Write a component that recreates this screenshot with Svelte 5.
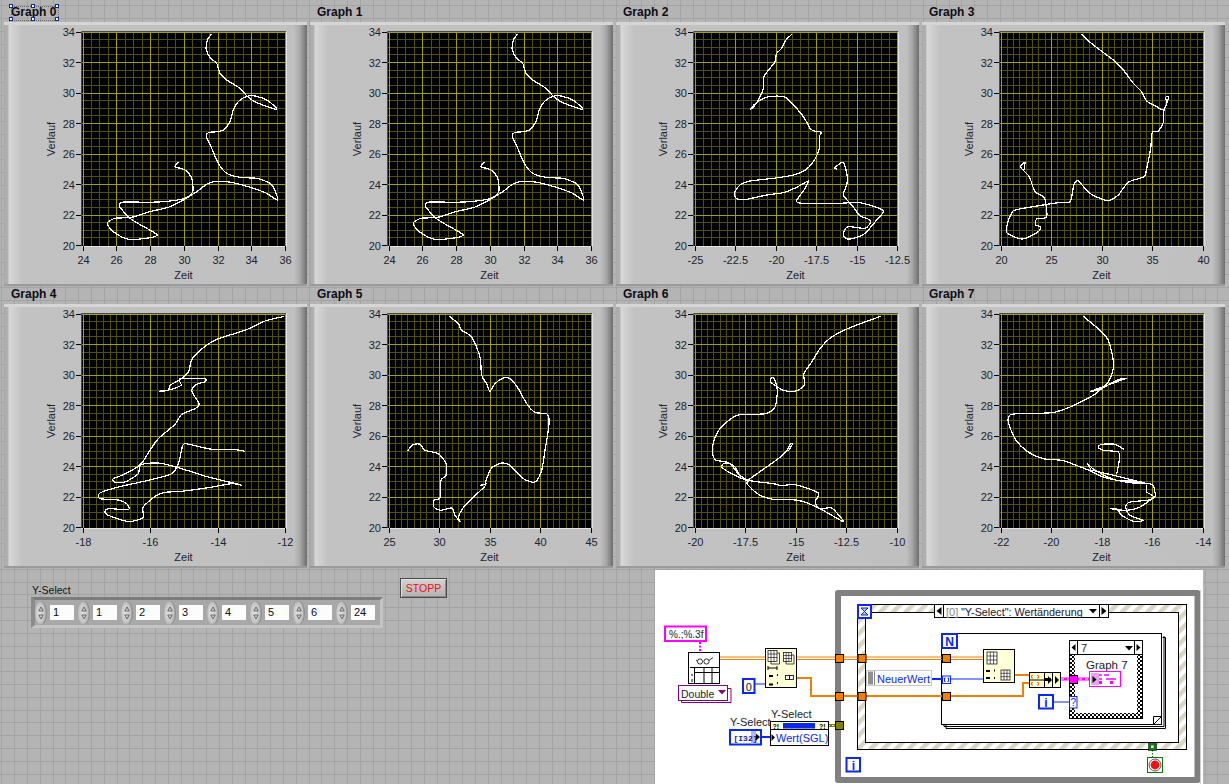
<script>
  const g0 = [[[635,102],[622,120],[619,150],[632,175],[650,190],[660,220],[680,240],[720,265],[745,292],[775,310],[830,328],[805,303],[770,289],[740,289],[715,305],[700,330],[690,365],[670,390],[650,395],[625,398],[619,410],[635,445],[655,490],[680,520],[720,532],[770,535],[800,545],[820,560],[833,600],[800,580],[760,565],[700,548],[660,544],[625,550],[590,575],[555,597],[510,620],[450,635],[395,652],[345,655],[322,670],[340,695],[385,718],[445,714],[472,705],[440,685],[390,655],[358,618],[372,606],[450,607],[510,603],[555,595],[578,575],[575,535],[555,510],[525,500],[535,487]]];
  const graphs = [
    { name: 'Graph 0', ticks: ['24','26','28','30','32','34','36'], sub: 4, zx: 0, zy: 0, curves: g0 },
    { name: 'Graph 1', ticks: ['24','26','28','30','32','34','36'], sub: 4, zx: 306, zy: 0, curves: g0 },
    { name: 'Graph 2', ticks: ['-25','-22.5','-20','-17.5','-15','-12.5'], sub: 5, zx: 680, zy: 25, curves: [[[335,28],[318,45],[305,70],[290,85],[285,110],[270,130],[252,155],[249,195],[240,215],[225,240],[212,253],[230,232],[265,215],[312,215],[335,235],[365,268],[382,295],[392,313],[412,320],[425,322],[418,335],[418,370],[405,402],[380,432],[340,450],[280,460],[210,468],[180,480],[163,505],[172,522],[200,523],[260,510],[310,503],[350,487],[385,468],[372,495],[350,527],[368,535],[480,535],[530,532],[575,542],[610,558],[590,585],[555,625],[520,640],[497,640],[490,625],[505,605],[555,610],[572,590],[560,580],[540,572],[515,540],[490,510],[500,480],[502,455],[490,412],[465,428],[472,433]]] },
    { name: 'Graph 3', ticks: ['20','25','30','35','40'], sub: 8, zx: 990, zy: 25, curves: [[[275,28],[310,60],[370,105],[400,135],[430,175],[455,200],[470,228],[500,245],[520,255],[530,235],[535,215],[527,217],[530,235],[522,255],[520,292],[505,318],[487,322],[482,370],[470,430],[462,455],[415,472],[385,510],[360,526],[340,524],[297,503],[265,468],[252,478],[240,530],[205,533],[160,540],[75,555],[62,570],[50,605],[52,625],[98,642],[145,620],[150,605],[137,600],[140,582],[170,575],[163,518],[135,500],[118,455],[92,427],[105,412],[102,435]]] },
    { name: 'Graph 4', ticks: ['-18','-16','-14','-12'], sub: 10, zx: 75, zy: 307, curves: [[[628,28],[570,42],[510,70],[430,95],[390,118],[352,155],[340,195],[315,218],[285,235],[280,250],[253,253],[285,248],[318,235],[315,215],[388,215],[390,224],[365,232],[350,252],[372,290],[360,305],[320,322],[300,352],[250,395],[225,430],[205,462],[190,478],[145,503],[115,515],[118,525],[150,525],[190,500],[195,475],[230,468],[265,470],[320,485],[400,510],[475,528],[500,535],[470,530],[400,542],[320,553],[270,556],[245,565],[205,600],[205,630],[185,640],[155,643],[100,625],[90,612],[105,605],[160,608],[155,590],[125,578],[75,575],[75,558],[130,540],[220,520],[290,500],[310,470],[322,420],[333,410],[410,427],[480,428],[510,433]]] },
    { name: 'Graph 5', ticks: ['25','30','35','40','45'], sub: 8, zx: 380, zy: 307, curves: [[[208,28],[235,50],[245,70],[275,90],[300,150],[305,205],[320,230],[330,253],[345,230],[368,214],[390,215],[415,245],[440,290],[465,316],[500,320],[507,335],[505,370],[495,430],[485,490],[465,525],[430,515],[390,475],[365,468],[335,483],[318,520],[317,535],[300,552],[255,595],[235,630],[240,643],[225,625],[215,603],[183,610],[162,600],[162,580],[180,572],[183,520],[198,505],[198,470],[175,440],[135,430],[120,412],[100,413],[82,432]],[[300,535],[317,532]]] },
    { name: 'Graph 6', ticks: ['-20','-17.5','-15','-12.5','-10'], sub: 8, zx: 685, zy: 307, curves: [[[587,28],[500,60],[440,90],[405,125],[380,165],[357,200],[358,235],[330,253],[295,250],[270,235],[257,225],[257,214],[268,215],[277,250],[270,300],[240,320],[160,324],[125,345],[95,380],[82,425],[90,458],[125,465],[150,480],[165,505],[190,522],[150,505],[112,482],[115,470],[135,470],[160,500],[190,520],[265,530],[290,536],[330,533],[400,558],[390,585],[405,605],[440,603],[470,635],[472,643],[405,605],[340,580],[270,578],[225,565],[195,540],[190,520],[280,455],[305,432],[315,412],[322,412],[310,432]]] },
    { name: 'Graph 7', ticks: ['-22','-20','-18','-16','-14'], sub: 8, zx: 990, zy: 307, curves: [[[280,28],[330,70],[355,100],[368,150],[370,185],[355,225],[325,248],[302,253],[365,230],[408,214],[385,218],[335,245],[310,265],[240,300],[185,317],[85,320],[60,324],[55,345],[75,395],[110,432],[160,455],[220,461],[300,490],[292,470],[315,490],[380,520],[440,522],[470,530],[400,512],[350,500],[300,490],[340,510],[420,527],[485,532],[495,570],[470,580],[420,585],[407,600],[420,625],[460,640],[430,643],[395,625],[380,605],[362,605],[410,610],[450,600],[490,570],[470,555],[470,535]],[[380,500],[388,460],[385,435],[340,430],[325,420],[335,412],[375,412],[403,428]]] }
  ];

  const plotL = 78, plotT = 10, plotW = 204, plotH = 214;
  const yTicks = ['34','32','30','28','26','24','22','20'];
  const tickStep = 30.5;
  const crisp = (v) => Math.floor(v) + 0.5;

  function xAt(i, n) { return crisp(plotL + 1 + (i * 202.5) / n); }
  function yAt(i) { return crisp(plotT + i * tickStep); }

  function hLines() {
    const out = [];
    for (let i = 0; i < 28; i++) out.push({ y: crisp(plotT + (i * tickStep) / 4), major: i % 4 === 0 });
    return out;
  }
  function vLines(g) {
    const n = (g.ticks.length - 1) * g.sub;
    const out = [];
    for (let i = 0; i <= n; i++) out.push({ x: xAt(i, n), major: i % g.sub === 0 });
    return out;
  }
  function curvePath(seg, g, idx) {
    const col = idx % 4, row = idx > 3 ? 1 : 0;
    const px = 4 + 306 * col, py = 22 + 282 * row;
    const p = seg.map(([x, y]) => [g.zx + x / 3 - px, g.zy + y / 3 - py]);
    let d = `M${p[0][0].toFixed(1)} ${p[0][1].toFixed(1)}`;
    for (let i = 0; i < p.length - 1; i++) {
      const a = p[Math.max(0, i - 1)], b = p[i], c = p[i + 1], e = p[Math.min(p.length - 1, i + 2)];
      const k = 1 / 8;
      d += `C${(b[0] + (c[0] - a[0]) * k).toFixed(1)} ${(b[1] + (c[1] - a[1]) * k).toFixed(1)} ${(c[0] - (e[0] - b[0]) * k).toFixed(1)} ${(c[1] - (e[1] - b[1]) * k).toFixed(1)} ${c[0].toFixed(1)} ${c[1].toFixed(1)}`;
    }
    return d;
  }
  const selects = ['1','1','2','3','4','5','6','24'];
  const handles = [[5,0],[27,0],[51,0],[5,13],[27,13],[51,13]];
</script>

<div class="page">
  <div class="board">
    {#each graphs as g, idx}
      <section class="cell">
        <div class="name">{g.name}</div>
        <div class="panel">
          <svg class="chart" width="303" height="262" viewBox="0 0 303 262">
            <rect x={plotL} y={plotT} width={plotW} height={plotH} fill="#000" />
            {#each hLines() as l}
              {#if !l.major}<line x1={plotL} x2={plotL + plotW} y1={l.y} y2={l.y} class="minor" />{/if}
            {/each}
            {#each vLines(g) as l}
              {#if !l.major}<line x1={l.x} x2={l.x} y1={plotT} y2={plotT + plotH} class="minor" />{/if}
            {/each}
            {#each hLines() as l}
              {#if l.major}<line x1={plotL} x2={plotL + plotW} y1={l.y} y2={l.y} class="major" />{/if}
            {/each}
            {#each vLines(g) as l}
              {#if l.major}<line x1={l.x} x2={l.x} y1={plotT} y2={plotT + plotH} class="major" />{/if}
            {/each}
            {#each g.curves as seg}
              <path d={curvePath(seg, g, idx)} class="trace" />
            {/each}
            <path d="M{plotL - 0.5} {plotT + plotH}V{plotT - 0.5}H{plotL + plotW}" class="frame" />
            <path d="M{plotL} {plotT + plotH + 0.5}H{plotL + plotW + 0.5}V{plotT}" class="frame-light" />
            {#each yTicks as t, i}
              <line x1="72" x2="77" y1={yAt(i)} y2={yAt(i)} class="tick" />
              <text x="71" y={plotT + i * tickStep + 4} text-anchor="end" class="axis">{t}</text>
            {/each}
            {#each g.ticks as t, i}
              <line x1={xAt(i, g.ticks.length - 1)} x2={xAt(i, g.ticks.length - 1)} y1={plotT + plotH} y2={plotT + plotH + 5} class="tick" />
              <text x={xAt(i, g.ticks.length - 1)} y="242" text-anchor="middle" class="axis">{t}</text>
            {/each}
            <text x="179.5" y="256.5" text-anchor="middle" class="axis">Zeit</text>
            <text x="51" y="117" text-anchor="middle" class="axis" transform="rotate(-90 51 117)">Verlauf</text>
          </svg>
        </div>
        {#if idx === 0}
          <div class="marquee"></div>
          {#each handles as h}
            <svg class="handle" width="4" height="4" viewBox="0 0 4 4" style="left:{h[0]}px;top:{h[1]}px">
              <rect x=".5" y=".5" width="3" height="3" fill="#fff" stroke="#0a2a8c" />
            </svg>
          {/each}
        {/if}
      </section>
    {/each}
  </div>

  <div class="lower">
    <div class="controls">
      <div class="group">
        <div class="ylabel">Y-Select</div>
        <div class="array">
          {#each selects as v}
            <div class="item">
              <svg class="spin" width="12" height="24" viewBox="0 0 12 24">
                <defs>
                  <radialGradient id="sp" cx=".4" cy=".5" r=".6">
                    <stop offset="0" stop-color="#e2e2e2" />
                    <stop offset=".7" stop-color="#c2c2c2" />
                    <stop offset="1" stop-color="#7e7e7e" />
                  </radialGradient>
                </defs>
                <ellipse cx="6" cy="12" rx="5.8" ry="12" fill="url(#sp)" />
                <path d="M6 6L3.8 10H8.2Z" fill="none" stroke="#666" />
                <path d="M6 18L3.8 14H8.2Z" fill="none" stroke="#666" />
              </svg>
              <span class="value">{v}</span>
            </div>
          {/each}
        </div>
      </div>
      <button class="stop">STOPP</button>
    </div>

    <svg class="diagram" width="548" height="214" viewBox="655 570 548 214">
      <defs>
        <pattern id="hatch" width="9" height="9" patternUnits="userSpaceOnUse" patternTransform="rotate(-45)">
          <rect width="9" height="9" fill="#fff" />
          <rect width="9" height="4.5" fill="#d8d5c2" />
        </pattern>
        <pattern id="check" width="4" height="4" patternUnits="userSpaceOnUse">
          <rect width="4" height="4" fill="#fff" />
          <rect width="2" height="2" fill="#000" />
          <rect x="2" y="2" width="2" height="2" fill="#000" />
        </pattern>
      </defs>

      <!-- while loop -->
      <path d="M838 593H1197.5V780H838Z" fill="none" stroke="#808080" stroke-width="6" stroke-linejoin="round" />
      <path d="M1200.5 590V784" stroke="#d0d0d0" stroke-width="1" />

      <!-- event structure -->
      <rect x="857.5" y="604.5" width="329" height="145" fill="url(#hatch)" stroke="#000" />
      <rect x="865.5" y="612.5" width="313" height="130" fill="#fff" stroke="#000" />

      <!-- for loop stack -->
      <path d="M1162.5 637.5H1165.5V728.5H946V725" fill="none" stroke="#000" />
      <path d="M1164 636V726.5H944V724.5" fill="none" stroke="#000" />
      <rect x="941.5" y="633.5" width="220" height="91" fill="#fff" stroke="#000" />
      <path d="M1153.5 724.5L1161.5 716.5H1153.5Z" fill="#fff" stroke="#000" />

      <!-- case structure -->
      <rect x="1069.5" y="640.5" width="73" height="78" fill="url(#check)" stroke="#000" />
      <rect x="1075" y="654" width="62" height="59" fill="#fff" />

      <!-- wires -->
      <path d="M720 657H765M720 659.5H765" class="w-or-thin" />
      <path d="M797 657H942M797 659.5H942" class="w-or-thin" />
      <path d="M797 678H811V696H1023V683H1029" class="w-or" />
      <path d="M950 657H983M950 659.5H983" class="w-or-thin" />
      <path d="M1015 675H1029" class="w-or" />
      <path d="M755 684H765" class="w-bl" />
      <path d="M932 679H942" class="w-bl2" />
      <path d="M950 679H983" class="w-bl" />
      <path d="M761 737H771" class="w-bl2" />
      <path d="M1054 702H1069" class="w-bl" />
      <path d="M700 642V652" stroke="#f0f" stroke-width="2" stroke-dasharray="2 1.5" fill="none" />
      <path d="M828 725.5H835" stroke="#808000" stroke-width="3" fill="none" />
      <path d="M828 725.5H835" stroke="#ffff80" stroke-width="1" stroke-dasharray="2 2" fill="none" />
      <path d="M1061 679H1089" stroke="#f0f" stroke-width="3" fill="none" />
      <path d="M1061 679H1089" stroke="#fff" stroke-width="1" stroke-dasharray="3 3" fill="none" />
      <path d="M1152.5 750V757" stroke="#0a7a0a" stroke-width="1" stroke-dasharray="1.5 1.5" fill="none" />

      <!-- tunnels on loop -->
      <rect x="835.5" y="654.5" width="8" height="8" class="t-or" />
      <rect x="835.5" y="692.5" width="8" height="8" class="t-or" />
      <rect x="858" y="654.5" width="8" height="8" class="t-or" />
      <rect x="858" y="692.5" width="8" height="8" class="t-or" />
      <rect x="835.5" y="721.5" width="8" height="8" fill="#808000" stroke="#000" />

      <!-- event selector -->
      <rect x="934.5" y="604.5" width="174" height="13" fill="#fff" stroke="#000" />
      <rect x="934.5" y="604.5" width="9" height="13" fill="#fff" stroke="#000" />
      <rect x="1099.5" y="604.5" width="9" height="13" fill="#fff" stroke="#000" />
      <path d="M941.5 607L936.5 611L941.5 615Z" fill="#000" />
      <path d="M1101.5 607L1106.5 611L1101.5 615Z" fill="#000" />
      <path d="M1089 609H1097L1093 613.5Z" fill="#000" />
      <text x="946" y="615.5" class="lab gray">[0]</text>
      <text x="961" y="615.5" class="lab sel">"Y-Select": Wertänderung</text>

      <!-- hourglass terminal -->
      <rect x="858" y="605" width="13" height="13" fill="#fff" stroke="#0a28f0" stroke-width="2" />
      <path d="M861 608H868L861 615H868Z" fill="#b8c4f4" stroke="#0a28a0" />

      <!-- NeuerWert -->
      <rect x="866.5" y="670.5" width="65" height="15" fill="#fff" stroke="#c8c8c8" />
      <rect x="868" y="671.5" width="5" height="13" fill="#909090" />
      <path d="M874.5 671V685" stroke="#888" />
      <text x="877" y="682.5" class="lab blue">NeuerWert</text>

      <!-- for loop terminals -->
      <rect x="942" y="634" width="15" height="14" fill="#fff" stroke="#0a28f0" stroke-width="2" />
      <text x="949.5" y="645.5" class="n">N</text>
      <rect x="942.5" y="654.5" width="8" height="8" class="t-or" />
      <rect x="942.5" y="692.5" width="8" height="8" class="t-or" />
      <rect x="942.5" y="676" width="8" height="7.5" fill="#fff" stroke="#0a28f0" />
      <path d="M945.5 678H944.5V681.5H945.5M947.5 678H948.5V681.5H947.5" stroke="#0a28f0" fill="none" />

      <!-- inner array box -->
      <rect x="983.5" y="649.5" width="31" height="33" class="yellow" />
      <rect x="987" y="652" width="10" height="12" fill="#fff" stroke="#000" stroke-width=".7" />
      <path d="M990.3 652V664M993.6 652V664M987 656H997M987 660H997" stroke="#000" stroke-width=".6" />
      <rect x="1001" y="670" width="9" height="10" fill="#fff" stroke="#000" stroke-width=".7" />
      <path d="M1004 670V680M1007 670V680M1001 673.3H1010M1001 676.6H1010" stroke="#000" stroke-width=".6" />
      <path d="M986 671H990M986 678H990M994 670.5H995M994 678H995" stroke="#000" stroke-width="2" />

      <!-- build/convert -->
      <rect x="1029.5" y="672.5" width="31" height="15" class="yellow" />
      <path d="M1044.5 672.5V687.5M1052.5 672.5V687.5M1029.5 680H1044.5" stroke="#000" fill="none" />
      <path d="M1033 675.5H1031.5V678H1033M1037 675.5H1038.5V678H1037M1033 682.5H1031.5V685H1033M1037 682.5H1038.5V685H1037" stroke="#e87800" fill="none" />
      <path d="M1045 679.5H1051" stroke="#000" stroke-width="3" />
      <path d="M1048 676L1052 680L1048 684ZM1055 676L1059 680L1055 684Z" fill="#000" />

      <!-- case selector + contents -->
      <rect x="1069.5" y="640.5" width="73" height="14" fill="#fff" stroke="#000" />
      <path d="M1077.5 640.5V654.5M1134.5 640.5V654.5" stroke="#000" />
      <path d="M1075.5 644L1071.5 647.5L1075.5 651Z" fill="#000" />
      <path d="M1136.5 644L1140.5 647.5L1136.5 651Z" fill="#000" />
      <path d="M1125 646H1133L1129 650.5Z" fill="#000" />
      <text x="1081" y="652" class="lab">7</text>
      <text x="1086" y="668.5" class="lab big">Graph 7</text>
      <rect x="1069.5" y="675.5" width="8" height="8" fill="#f0f" stroke="#000" />
      <rect x="1069.5" y="696.5" width="7.5" height="11.5" fill="#fff" stroke="#0a28f0" />
      <text x="1073.2" y="706" text-anchor="middle" class="tiny blue">?</text>

      <!-- property node -->
      <rect x="1089.5" y="671.5" width="31" height="15" fill="#fff" stroke="#f0f" />
      <rect x="1091" y="673" width="8" height="12" fill="#f0a0f0" />
      <path d="M1092.5 676L1096.5 679.5L1092.5 683Z" fill="#000" />
      <path d="M1099 675H1102M1099 679H1102M1104 675H1109M1106 679H1116" stroke="#f0f" stroke-width="1.6" />
      <rect x="1099" y="681" width="3" height="3" fill="#f0f" />
      <rect x="1110" y="681" width="3" height="3" fill="#f0f" />

      <!-- i terminal inside -->
      <rect x="1039" y="695" width="14" height="13.5" fill="#fff" stroke="#0a28f0" stroke-width="2" />
      <text x="1046" y="706.5" class="n">i</text>

      <!-- while i / stop -->
      <rect x="846.5" y="758" width="13.5" height="13.5" fill="#fff" stroke="#0a28f0" stroke-width="2" />
      <text x="853.3" y="769.5" class="n">i</text>
      <rect x="1148.5" y="743.5" width="8" height="7" fill="#0a7a0a" stroke="#000" stroke-width=".5" />
      <rect x="1151" y="745.5" width="2.6" height="2.6" fill="#fff" />
      <rect x="1147.5" y="757.5" width="15" height="15" fill="#fff" stroke="#0a7a0a" />
      <circle cx="1155" cy="765" r="6" fill="#fff" stroke="#555" />
      <circle cx="1155" cy="765" r="4.4" fill="#f01010" />

      <!-- format string -->
      <rect x="665" y="626.5" width="41" height="14.5" fill="#fff" stroke="#f0f" stroke-width="2" />
      <text x="669" y="637.5" class="lab small">%.;%.3f</text>

      <!-- read spreadsheet -->
      <rect x="688.5" y="652.5" width="31" height="31" fill="#fff" stroke="#000" />
      <circle cx="700" cy="661.5" r="2.6" fill="none" stroke="#000" stroke-width=".8" />
      <circle cx="706.5" cy="661.5" r="2.6" fill="none" stroke="#000" stroke-width=".8" />
      <path d="M697.5 661L696 660M709 660.5L713 657.5" stroke="#000" stroke-width=".8" />
      <path d="M690 667.5H719.5M694.5 667.5V683M704 667.5V683M712 667.5V683M694.5 672.5H719.5" stroke="#000" fill="none" />
      <path d="M692 674V676M692 679V682" stroke="#000" />

      <!-- double -->
      <path d="M681.5 701V702.5H731V688.5H728" fill="none" stroke="#800080" />
      <rect x="678.5" y="685.5" width="49" height="15" fill="#fff" stroke="#800080" />
      <text x="681" y="697.5" class="lab dbl">Double</text>
      <path d="M718 690H726L722 694.5Z" fill="#800080" />

      <!-- array subset -->
      <rect x="765.5" y="648.5" width="31" height="39" class="yellow" />
      <rect x="768" y="650.5" width="9" height="11" fill="#fff" stroke="#000" stroke-width=".7" />
      <path d="M771 650.5V661.5M774 650.5V661.5M768 654H777M768 657.5H777" stroke="#000" stroke-width=".6" />
      <path d="M777 653H779.5V664H771V661.5" fill="none" stroke="#000" stroke-width=".7" />
      <rect x="783.5" y="652.5" width="8" height="9" fill="#fff" stroke="#000" stroke-width=".7" />
      <path d="M786.2 652.5V661.5M788.8 652.5V661.5M783.5 655.5H791.5M783.5 658.5H791.5" stroke="#000" stroke-width=".6" />
      <path d="M791.5 655H794V664H786V661.5" fill="none" stroke="#000" stroke-width=".7" />
      <path d="M768 668H777M768 666V670M777 666V670" stroke="#000" />
      <path d="M769 676H773M769 684.5H773M777 675H778M777 683H778" stroke="#000" stroke-width="2" />
      <rect x="785.5" y="675.5" width="4" height="4" fill="#fff" stroke="#000" stroke-width=".8" />
      <rect x="789.5" y="675.5" width="4" height="4" fill="#fff" stroke="#000" stroke-width=".8" />

      <!-- 0 constant -->
      <rect x="743" y="679" width="11.5" height="14" fill="#fff" stroke="#0a28f0" stroke-width="2" />
      <text x="748.7" y="690.5" text-anchor="middle" class="lab">0</text>

      <!-- event data -->
      <text x="730" y="726" class="lab">Y-Select</text>
      <text x="771" y="718" class="lab">Y-Select</text>
      <rect x="730" y="730" width="31" height="14.5" fill="#fff" stroke="#0a28f0" stroke-width="2" />
      <rect x="751" y="731" width="5" height="12.5" fill="#b0b8f8" />
      <text x="733.5" y="741" class="mono">[I32]</text>
      <path d="M756 733.5L760 737L756 740.5Z" fill="#000" />
      <rect x="770.5" y="721.5" width="58" height="24" fill="#fff" stroke="#000" />
      <rect x="771" y="722" width="57" height="8" fill="#ffffd8" />
      <path d="M770.5 729.5H828.5" stroke="#000" />
      <rect x="783" y="723" width="32" height="5.5" fill="#0a28f0" />
      <text x="772.5" y="729" class="micro">?!</text>
      <text x="819" y="729" class="micro">?!</text>
      <path d="M771.5 734L775 737.5L771.5 741Z" fill="#000" />
      <text x="776" y="742" class="lab blue">Wert(SGL)</text>
    </svg>
  </div>
</div>

<style>
  :global(body) {
    margin: 0;
    overflow: hidden;
  }
  .page {
    position: relative;
    width: 1229px;
    height: 784px;
    overflow: hidden;
    font-family: "Liberation Sans", Arial, sans-serif;
    background-color: #b4b4b4;
    background-image:
      repeating-linear-gradient(90deg, transparent 0 1.5px, #a4a4a4 1.5px 2.5px, transparent 2.5px 12.8px),
      repeating-linear-gradient(180deg, transparent 0 5.5px, #a4a4a4 5.5px 6.5px, transparent 6.5px 12.8px);
  }
  .board {
    display: grid;
    grid-template-columns: repeat(4, 306px);
    grid-auto-rows: 282px;
    padding: 4px 0 0 4px;
  }
  .cell {
    position: relative;
  }
  .name {
    height: 18px;
    line-height: 17px;
    padding-left: 7px;
    font-size: 12px;
    font-weight: 700;
    color: #0c0c14;
  }
  .panel {
    width: 303px;
    height: 264px;
    box-sizing: border-box;
    border-top: 3px solid #d6d6d6;
    border-bottom: 2px solid #9a9a9a;
    background: linear-gradient(90deg, #a9a9a9 0, #b2b2b2 4px, #d8d8d8 5px, #c2c2c2 18px, #c0c0c0 290px, #a8a8a8 296px, #6e6e6e 303px);
  }
  .chart {
    display: block;
    margin-top: -3px;
    overflow: visible;
  }
  .minor { stroke: #50500c; stroke-width: 1; }
  .major { stroke: #a0a000; stroke-width: 1; }
  .trace { fill: none; stroke: #fff; stroke-width: 1.25; stroke-linejoin: round; shape-rendering: crispEdges; }
  .frame { fill: none; stroke: #4a4a4a; }
  .frame-light { fill: none; stroke: #e4e4e4; }
  .tick { stroke: #000; stroke-width: 1; }
  .axis { font-size: 11px; fill: #1c2430; }
  .marquee {
    position: absolute;
    left: 7px;
    top: 2px;
    width: 46px;
    height: 13px;
    border: 1px dotted #666;
  }
  .handle {
    position: absolute;
  }
  .lower {
    display: flex;
    align-items: flex-start;
  }
  .controls {
    display: flex;
    align-items: flex-start;
    gap: 17px;
    width: 655px;
    box-sizing: border-box;
    padding-left: 31px;
  }
  .group {
    margin-top: 15px;
  }
  .ylabel {
    font-size: 10.5px;
    line-height: 14px;
    color: #111;
    padding-left: 1px;
  }
  .array {
    display: flex;
    width: 352px;
    height: 31px;
    box-sizing: border-box;
    border-style: solid;
    border-width: 3px 3px 3px 4px;
    border-color: #7c7c7c #c4c4c4 #c4c4c4 #8c8c8c;
    background: #a8a8a8;
    align-items: center;
  }
  .item {
    display: flex;
    align-items: center;
    gap: 3px;
    width: 43px;
    flex: none;
  }
  .spin {
    display: block;
    flex: none;
  }
  .value {
    display: block;
    width: 24px;
    height: 15px;
    line-height: 15px;
    padding-left: 3px;
    box-sizing: border-box;
    background: #fcfcfc;
    font-size: 11px;
    color: #0a0a28;
  }
  .stop {
    width: 47px;
    height: 20px;
    margin-top: 10px;
    padding: 0;
    box-sizing: border-box;
    border: 1px solid #4a4a4a;
    box-shadow: inset 1px 1px 0 #e2e2e2, inset -1px -1px 0 #8a8a8a;
    background: linear-gradient(180deg, #d4d4d4, #b0b0b0);
    color: #f01010;
    font-family: "Liberation Sans", Arial, sans-serif;
    font-size: 10.5px;
  }
  .diagram {
    display: block;
    margin-top: 2px;
    background: #fff;
    flex: none;
  }
  .w-or-thin { fill: none; stroke: #f08000; stroke-width: 1; }
  .w-or { fill: none; stroke: #f08000; stroke-width: 2; }
  .w-bl { fill: none; stroke: #0a28f0; stroke-width: 1; }
  .w-bl2 { fill: none; stroke: #0a28f0; stroke-width: 2; }
  .t-or { fill: #f08000; stroke: #000; }
  .yellow { fill: #ffffd8; stroke: #000; }
  .lab { font-size: 11px; fill: #1a1a2a; }
  .sel { font-size: 10.8px; }
  .dbl { font-size: 10.5px; }
  .big { font-size: 11.5px; }
  .small { font-size: 10px; }
  .gray { fill: #8a8a8a; }
  .blue { fill: #0a28f0; }
  .n { font-size: 12px; font-weight: 700; fill: #0a28f0; text-anchor: middle; }
  .tiny { font-size: 10px; }
  .mono { font-family: "Liberation Mono", monospace; font-size: 8px; font-weight: 700; fill: #0a28a0; }
  .micro { font-size: 7px; font-weight: 700; fill: #000; }
</style>
